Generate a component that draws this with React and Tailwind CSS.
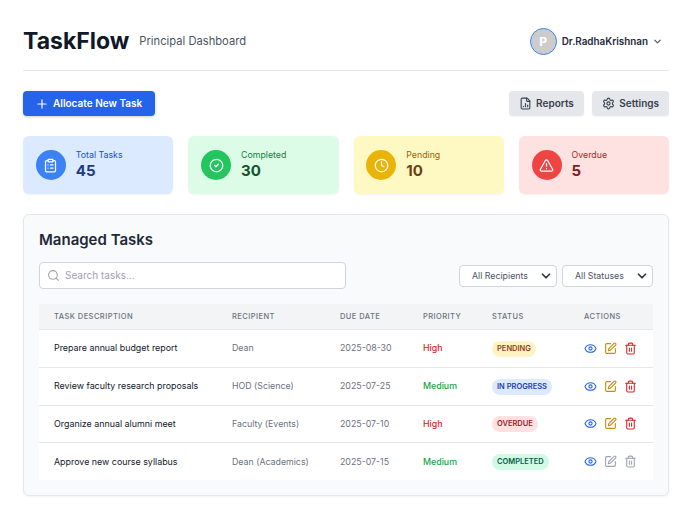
import React from 'react';
import {
  Plus, FileChartColumn, Settings, ClipboardList, CircleCheck, Clock, TriangleAlert,
  Eye, SquarePen, Trash2, Search, ChevronDown,
} from 'lucide-react';

const STATS = [
  { label: 'Total Tasks', value: 45, Icon: ClipboardList, card: 'bg-[#dbeafe]', circle: 'bg-[#3b82f6]', labelColor: 'text-[#1d4ed8]', valueColor: 'text-[#1e3a8a]' },
  { label: 'Completed', value: 30, Icon: CircleCheck, card: 'bg-[#dcfce7]', circle: 'bg-[#22c55e]', labelColor: 'text-[#15803d]', valueColor: 'text-[#14532d]' },
  { label: 'Pending', value: 10, Icon: Clock, card: 'bg-[#fef9c3]', circle: 'bg-[#eab308]', labelColor: 'text-[#a16207]', valueColor: 'text-[#713f12]' },
  { label: 'Overdue', value: 5, Icon: TriangleAlert, card: 'bg-[#fee2e2]', circle: 'bg-[#ef4444]', labelColor: 'text-[#b91c1c]', valueColor: 'text-[#7f1d1d]' },
];

const TASKS = [
  { title: 'Prepare annual budget report', to: 'Dean', due: '2025-08-30', priority: 'High', status: 'PENDING', badge: 'bg-[#fef3c7] text-[#92400e]', active: true, row: 'h-[38px]' },
  { title: 'Review faculty research proposals', to: 'HOD (Science)', due: '2025-07-25', priority: 'Medium', status: 'IN PROGRESS', badge: 'bg-[#dbeafe] text-[#1e40af]', active: true, row: 'h-[38px]' },
  { title: 'Organize annual alumni meet', to: 'Faculty (Events)', due: '2025-07-10', priority: 'High', status: 'OVERDUE', badge: 'bg-[#fee2e2] text-[#991b1b]', active: true, row: 'h-[37px]' },
  { title: 'Approve new course syllabus', to: 'Dean (Academics)', due: '2025-07-15', priority: 'Medium', status: 'COMPLETED', badge: 'bg-[#d1fae5] text-[#065f46]', active: false, row: 'h-[38px]' },
];

const App = () => {
  return (
    <div className="min-h-[517px] bg-white pl-[23px] pr-[25px] font-['Inter',sans-serif]">
      {/* Header */}
      <header className="flex h-[71px] items-center justify-between border-b border-[#e5e7eb] pt-[13px]">
        <div className="flex items-center gap-[10px]">
          <h1 className="text-[23px] font-bold leading-none text-[#111827]">TaskFlow</h1>
          <span className="text-[11.2px] text-[#4b5563]">Principal Dashboard</span>
        </div>
        <div className="flex items-center pr-[6px]">
          <div className="flex size-[27px] items-center justify-center rounded-full border border-[#3b82f6] bg-[#cccccc] text-[12px] font-bold text-white">P</div>
          <span className="ml-[5px] text-[9.9px] font-semibold text-[#1f2937]">Dr.RadhaKrishnan</span>
          <ChevronDown className="ml-[4px] size-[11px] text-[#4b5563]" strokeWidth={2.5} />
        </div>
      </header>

      {/* Actions */}
      <div className="mt-5 flex items-center justify-between">
        <button className="flex h-[25px] items-center gap-[4px] rounded bg-[#2563eb] pl-[12px] pr-[13px] text-[10px] font-semibold text-white shadow-[0_1px_3px_rgba(0,0,0,0.2)]">
          <Plus className="size-[14px]" />
          Allocate New Task
        </button>
        <div className="flex gap-2">
          <button className="flex h-[25px] items-center gap-[4.5px] rounded bg-[#e5e7eb] px-[10px] text-[10px] font-semibold text-[#374151] shadow-[0_1px_2px_rgba(0,0,0,0.05)]">
            <FileChartColumn className="size-[13px]" />
            Reports
          </button>
          <button className="flex h-[25px] items-center gap-[4.5px] rounded bg-[#e5e7eb] px-[10px] text-[10px] font-semibold text-[#374151] shadow-[0_1px_2px_rgba(0,0,0,0.05)]">
            <Settings className="size-[13px]" />
            Settings
          </button>
        </div>
      </div>

      {/* Stats */}
      <div className="mt-5 grid grid-cols-4 gap-[15px]">
        {STATS.map((stat) => (
          <div key={stat.label} className={`flex h-[58px] items-center gap-[10px] rounded-md px-[12.75px] shadow-[0_1px_2px_rgba(0,0,0,0.05)] ${stat.card}`}>
            <div className={`flex size-[30px] items-center justify-center rounded-full text-white ${stat.circle}`}>
              <stat.Icon className="size-[15px]" />
            </div>
            <div>
              <div className={`text-[8.8px] leading-[10px] ${stat.labelColor}`}>{stat.label}</div>
              <div className={`text-[15px] font-bold leading-[21px] ${stat.valueColor}`}>{stat.value}</div>
            </div>
          </div>
        ))}
      </div>

      {/* Managed tasks */}
      <section className="mt-5 h-[282px] rounded-md border border-[#e5e7eb] bg-[#f9fafb] px-[15px] pt-[15px] shadow-[0_1px_2px_rgba(0,0,0,0.05)]">
        <h2 className="text-[15px] font-semibold leading-[20px] text-[#1f2937]">Managed Tasks</h2>
        <div className="mt-[12px] flex items-center justify-between">
          <div className="flex h-[27px] w-[307px] items-center gap-[5px] rounded border border-[#d1d5db] bg-white pl-[7px] text-[10px] text-[#9ca3af]">
            <Search className="size-[13px]" />
            Search tasks...
          </div>
          <div className="flex gap-[5px]">
            <div className="relative">
              <select className="block h-[22px] w-[98px] appearance-none rounded border border-[#d1d5db] bg-white pl-3 text-[8.8px] text-[#4b5563]">
                <option>All Recipients</option>
              </select>
              <ChevronDown className="pointer-events-none absolute right-[4px] top-[4px] size-[14px] text-[#333333]" strokeWidth={3} />
            </div>
            <div className="relative">
              <select className="block h-[22px] w-[91px] appearance-none rounded border border-[#d1d5db] bg-white pl-3 text-[8.8px] text-[#4b5563]">
                <option>All Statuses</option>
              </select>
              <ChevronDown className="pointer-events-none absolute right-[4px] top-[4px] size-[14px] text-[#333333]" strokeWidth={3} />
            </div>
          </div>
        </div>
        <table className="mt-[15px] w-full table-fixed border-collapse bg-white text-left">
          <thead>
            <tr className="h-[25px] border-b border-[#e5e7eb] bg-[#f3f4f6] text-[7.5px] tracking-[0.45px] text-[#6b7280]">
              <th className="w-[178px] pl-[15px] font-medium">TASK DESCRIPTION</th>
              <th className="w-[108px] pl-[15px] font-medium">RECIPIENT</th>
              <th className="w-[83px] pl-[15px] font-medium">DUE DATE</th>
              <th className="w-[69px] pl-[15px] font-medium">PRIORITY</th>
              <th className="w-[92px] pl-[15px] font-medium">STATUS</th>
              <th className="pl-[15px] font-medium">ACTIONS</th>
            </tr>
          </thead>
          <tbody>
            {TASKS.map((task) => (
              <tr key={task.title} className={`border-b border-[#e5e7eb] text-[8.8px] last:border-b-0 ${task.row}`}>
                <td className="whitespace-nowrap pl-[15px] text-[8.9px] text-[#111827]">{task.title}</td>
                <td className="whitespace-nowrap pl-[15px] text-[#6b7280]">{task.to}</td>
                <td className="pl-[15px] text-[#6b7280]">{task.due}</td>
                <td className={`pl-[15px] font-medium ${task.priority === 'High' ? 'text-[#dc2626]' : 'text-[#16a34a]'}`}>{task.priority}</td>
                <td className="pl-[15px]">
                  <span className={`mt-[1px] block w-fit whitespace-nowrap rounded-full px-[5px] py-[3px] text-[7.5px] font-semibold leading-[10px] ${task.badge}`}>{task.status}</span>
                </td>
                <td className="pl-[15px]">
                  <div className="flex items-center gap-[7px]">
                    <Eye className="size-[13px] text-[#2563eb]" />
                    <SquarePen className={`size-[13px] ${task.active ? 'text-[#ca8a04]' : 'text-[#9ca3af]'}`} />
                    <Trash2 className={`size-[13px] ${task.active ? 'text-[#dc2626]' : 'text-[#9ca3af]'}`} />
                  </div>
                </td>
              </tr>
            ))}
          </tbody>
        </table>
      </section>
    </div>
  );
};

export default App;
